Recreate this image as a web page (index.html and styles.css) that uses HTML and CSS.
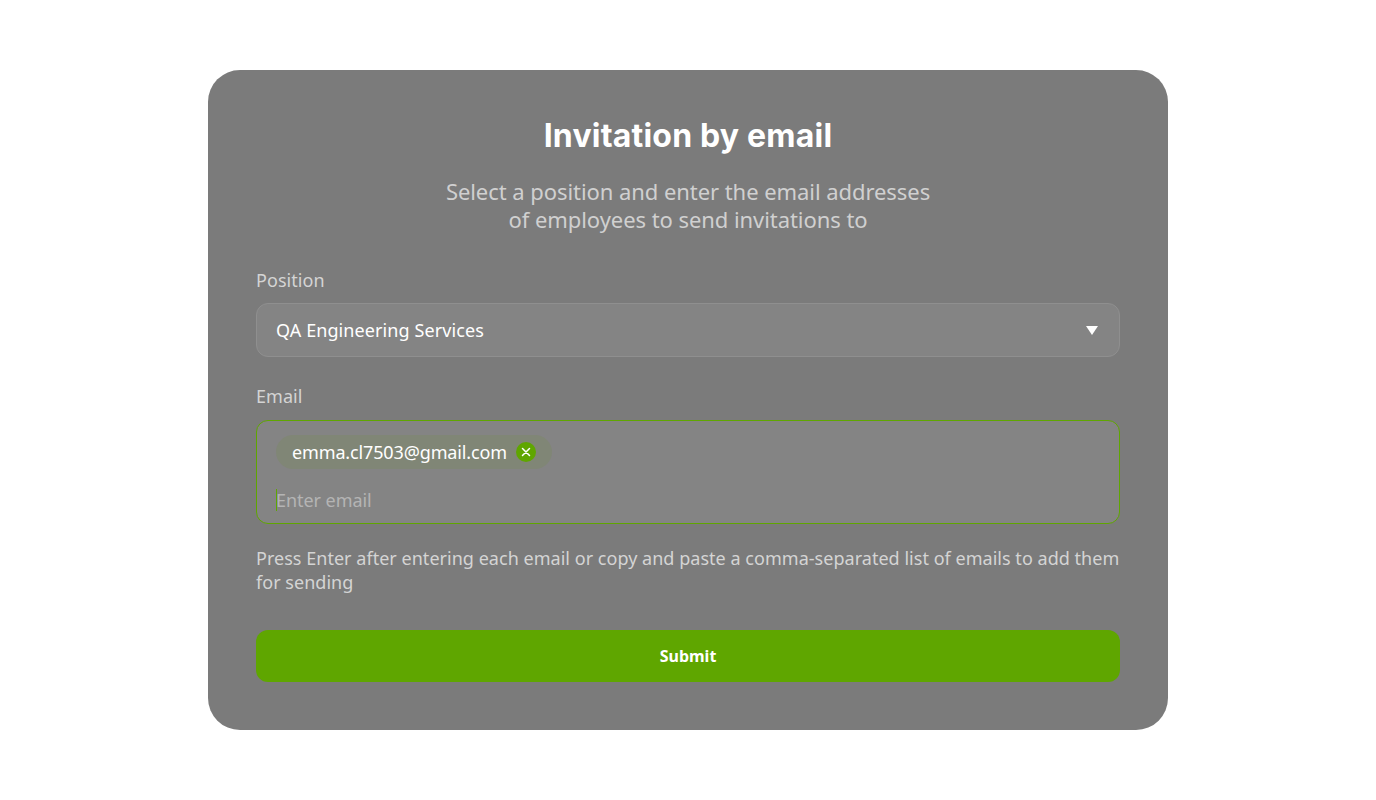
FILE: index.html
```html
<!DOCTYPE html>
<html lang="en">
<head>
<meta charset="UTF-8">
<title>Invitation by email</title>
<link rel="stylesheet" href="styles.css">
</head>
<body>
<div class="page">
  <form class="card">
    <h1 class="card-title">Invitation by email</h1>
    <p class="card-sub">Select a position and enter the email addresses<br>of employees to send invitations to</p>

    <div class="field">
      <div class="field-label">Position</div>
      <div class="select">
        <span>QA Engineering Services</span>
        <svg class="select-arrow" width="12" height="9" viewBox="0 0 12 9"><path d="M0 0H12L6 9Z" fill="#fff"/></svg>
      </div>
    </div>

    <div class="field field-email">
      <div class="field-label">Email</div>
      <div class="email-box">
        <div class="chip">
          <span>emma.cl7503@gmail.com</span>
          <span class="chip-close">
            <svg width="10" height="10" viewBox="0 0 10 10"><path d="M1.5 1.5L8.5 8.5M8.5 1.5L1.5 8.5" stroke="#fff" stroke-width="1.5" stroke-linecap="round"/></svg>
          </span>
        </div>
        <div class="email-input">Enter email</div>
      </div>
    </div>

    <p class="hint">Press Enter after entering each email or copy and paste a comma-separated list of emails to add them for sending</p>

    <button type="button" class="submit">Submit</button>
  </form>
</div>
</body>
</html>
```

FILE: styles.css
```css
html, body {
  margin: 0;
  padding: 0;
  background-color: #ffffff;
}

.page {
  display: flex;
  justify-content: center;
  padding-top: 70px;
  height: 730px;
}

.card {
  box-sizing: border-box;
  width: 960px;
  height: 660px;
  padding: 48px;
  background-color: #7b7b7b;
  border-radius: 32px;
  font-family: "Noto Sans", sans-serif;
  color: #ffffff;
}

.card-title {
  margin: 0;
  height: 36px;
  font-family: "Inter", sans-serif;
  font-size: 32px;
  line-height: 36px;
  font-weight: 700;
  letter-spacing: 0.2px;
  text-align: center;
}

.card-sub {
  margin: 23px 0 0;
  font-size: 22px;
  line-height: 28px;
  letter-spacing: -0.06px;
  text-align: center;
  color: #d0d0d0;
}

.field {
  margin-top: 35px;
}

.field-label {
  margin-bottom: 11px;
  font-size: 18px;
  line-height: 24px;
  letter-spacing: 0.05px;
  color: #d4d4d4;
}

.field-email {
  margin-top: 27px;
}

.field-email .field-label {
  margin-bottom: 12px;
}

.select {
  box-sizing: border-box;
  display: flex;
  align-items: center;
  justify-content: space-between;
  height: 54px;
  padding: 0 21px 0 19px;
  background-color: #848484;
  border: 1px solid #8f8f8f;
  border-radius: 12px;
  font-size: 18px;
  letter-spacing: 0.09px;
}

.email-box {
  box-sizing: border-box;
  height: 104px;
  padding: 14px 19px 0;
  background-color: #848484;
  border: 1px solid #5fa600;
  border-radius: 12px;
}

.chip {
  display: flex;
  align-items: center;
  box-sizing: border-box;
  gap: 9px;
  width: 276px;
  height: 34px;
  padding: 0 16px;
  background-color: #808676;
  border-radius: 17px;
  font-size: 18px;
  letter-spacing: -0.14px;
}

.chip-close {
  display: flex;
  align-items: center;
  justify-content: center;
  width: 20px;
  height: 20px;
  border-radius: 50%;
  background-color: #5fa600;
}

.email-input {
  margin-top: 20px;
  height: 22px;
  border-left: 1px solid #5fa600;
  text-indent: -1px;
  font-size: 18px;
  line-height: 22px;
  letter-spacing: -0.05px;
  color: #b4b4b4;
}

.hint {
  margin: 22px 0 0;
  font-size: 18px;
  line-height: 24px;
  letter-spacing: 0.03px;
  color: #d4d4d4;
}

.submit {
  display: block;
  width: 100%;
  height: 52px;
  margin-top: 36px;
  border: none;
  border-radius: 12px;
  background-color: #5fa600;
  color: #ffffff;
  font-family: "Noto Sans", sans-serif;
  font-size: 16px;
  font-weight: 700;
}
```
